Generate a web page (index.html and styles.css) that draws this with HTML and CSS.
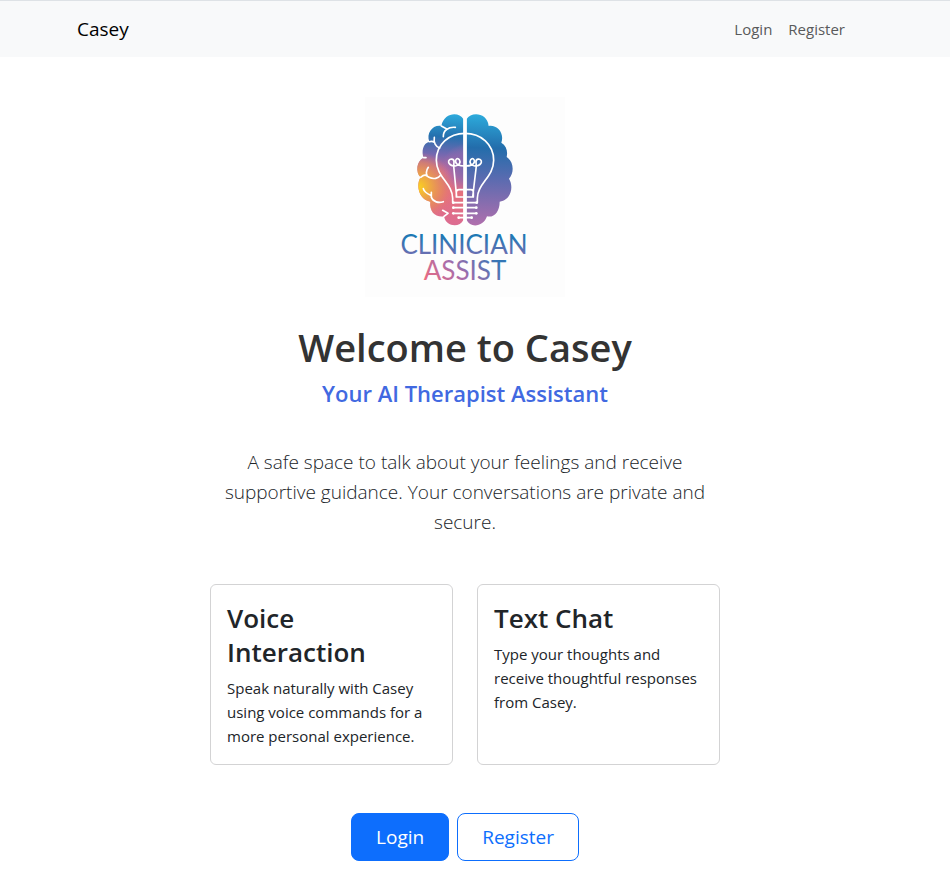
FILE: index.html
```html
<!DOCTYPE html>
<html lang="en">
<head>
<meta charset="utf-8">
<meta name="viewport" content="width=device-width, initial-scale=1">
<title>Casey</title>
<link rel="stylesheet" href="styles.css">
</head>
<body>
<header class="navbar">
  <div class="container navbar-inner">
    <a class="brand" href="#">Casey</a>
    <nav class="nav-links">
      <a href="#login">Login</a>
      <a href="#register">Register</a>
    </nav>
  </div>
</header>
<main class="page">
  <div class="container hero">
    <svg class="logo" viewBox="0 0 200 200" role="img" aria-label="Clinician Assist">
      <defs>
        <linearGradient id="left" gradientUnits="userSpaceOnUse" x1="120" y1="28" x2="105" y2="361">
          <stop offset="0" stop-color="#2ca9db"/>
          <stop offset=".2" stop-color="#2570ae"/>
          <stop offset=".36" stop-color="#7468b0"/>
          <stop offset=".52" stop-color="#c66c9c"/>
          <stop offset=".7" stop-color="#e5707c"/>
          <stop offset="1" stop-color="#dc6c92"/>
        </linearGradient>
        <radialGradient id="sun" gradientUnits="userSpaceOnUse" cx="42" cy="246" r="105">
          <stop offset="0" stop-color="#fbd021"/>
          <stop offset=".35" stop-color="#eda744" stop-opacity=".95"/>
          <stop offset=".7" stop-color="#e5865f" stop-opacity=".7"/>
          <stop offset="1" stop-color="#e5707c" stop-opacity="0"/>
        </radialGradient>
        <radialGradient id="dusk" gradientUnits="userSpaceOnUse" cx="185" cy="190" r="75">
          <stop offset="0" stop-color="#7468b0"/>
          <stop offset=".5" stop-color="#8c69ae" stop-opacity=".7"/>
          <stop offset="1" stop-color="#b06aa8" stop-opacity="0"/>
        </radialGradient>
        <linearGradient id="right" gradientUnits="userSpaceOnUse" x1="225" y1="28" x2="215" y2="361">
          <stop offset="0" stop-color="#2cabdc"/>
          <stop offset=".3" stop-color="#236dab"/>
          <stop offset=".58" stop-color="#5b6bb0"/>
          <stop offset="1" stop-color="#b06fad"/>
        </linearGradient>
        <linearGradient id="word1" x1="0" y1="0" x2="0" y2="1">
          <stop offset=".25" stop-color="#1f78b4"/>
          <stop offset=".85" stop-color="#6d6eb2"/>
        </linearGradient>
        <linearGradient id="word2" x1="0" y1=".8" x2="1" y2=".4">
          <stop offset="0" stop-color="#ee6c80"/>
          <stop offset=".45" stop-color="#a56dac"/>
          <stop offset="1" stop-color="#3276b6"/>
        </linearGradient>
        <path id="lobe" d="M175 42C162 20 117 22 109 63C84 58 63 84 73 110C53 115 49 140 56 158C34 167 31 202 47 217C32 239 41 284 76 290C73 321 92 338 117 334C122 366 165 369 175 345Z"/>
      </defs>
      <rect width="200" height="200" fill="#fdfdfd"/>
      <g transform="translate(40 8) scale(.33333)">
        <use href="#lobe" fill="url(#left)"/>
        <use href="#lobe" fill="url(#dusk)"/>
        <use href="#lobe" fill="url(#sun)"/>
        <path fill="url(#right)" d="M185 42C198 20 247 22 251 63C277 59 299 85 289 113C304 122 309 139 305 156C326 169 329 203 312 221C328 247 316 286 284 290C284 319 268 339 246 334C236 366 195 370 185 345Z"/>
        <g fill="none" stroke="#fff" stroke-width="5" stroke-linecap="round" stroke-linejoin="round">
          <path d="M109 63L124 71M151 67C130 65 114 77 115 95M73 110C79 108 84 109 88 112M88 97C85 112 92 125 104 129M56 158H63M70 187C62 198 64 208 66 211M47 217C60 206 64 211 72 217C86 224 100 220 107 211M55 251C57 261 66 266 77 271M79 262V277C84 291 101 295 115 290M113 316L129 325L117 334"/>
          <path d="M143 293V280C143 236 94 216 94 166C94 118 132 85 180 85S266 118 266 166C266 216 217 236 217 280V293M143 293H217"/>
          <path d="M155 276L146 183C137 181 129 176 131 168C134 159 147 161 147 170C147 178 144 183 151 183C163 181 168 172 163 164C158 157 150 162 152 171C154 181 165 183 180 183C195 183 206 181 208 171C210 162 202 157 197 164C192 172 197 181 209 183C216 183 213 178 213 170C213 161 226 159 229 168C231 176 223 181 214 183L203 276M155 276H205M154 276V262C154 255 158 254 162 254H198C202 254 205 257 205 262V276"/>
          <path d="M145 308H214M145 325H214M161 338H200"/>
        </g>
        <g fill="#fff"><circle cx="145" cy="293" r="4"/><circle cx="215" cy="293" r="4"/><circle cx="145" cy="308" r="4"/><circle cx="214" cy="308" r="4"/><circle cx="145" cy="325" r="4"/><circle cx="214" cy="325" r="4"/><circle cx="161" cy="338" r="4"/><circle cx="200" cy="338" r="4"/></g>
        <path d="M175 25H185V362H175Z" fill="#fff"/>
      </g>
      <text class="logo-word" x="99" y="157" fill="url(#word1)">CLINICIAN</text>
      <text class="logo-word" x="100" y="183" fill="url(#word2)">ASSIST</text>
    </svg>
    <h1>Welcome to Casey</h1>
    <p class="tagline">Your AI Therapist Assistant</p>
    <p class="lead">A safe space to talk about your feelings and receive supportive guidance. Your conversations are private and secure.</p>
    <div class="features">
      <section class="card">
        <h2>Voice Interaction</h2>
        <p>Speak naturally with Casey using voice commands for a more personal experience.</p>
      </section>
      <section class="card">
        <h2>Text Chat</h2>
        <p>Type your thoughts and receive thoughtful responses from Casey.</p>
      </section>
    </div>
    <div class="actions">
      <a class="btn btn-primary" href="#login">Login</a>
      <a class="btn btn-outline" href="#register">Register</a>
    </div>
  </div>
</main>
</body>
</html>
```
FILE: styles.css
```css
* { box-sizing: border-box; }

body {
  margin: 0;
  background: #fff;
  color: #212529;
  font: 15px/24px "Segoe UI", "Open Sans", "Noto Sans", sans-serif;
}

h1, h2, p { margin: 0; }
a { text-decoration: none; }

.container {
  max-width: 800px;
  margin: 0 auto;
  padding: 0 12px;
}

.navbar {
  background: #f8f9fa;
  border-top: 1px solid #dee2e6;
  padding: 8px 20px 8px 0;
}

.navbar-inner {
  display: flex;
  align-items: center;
  justify-content: space-between;
  min-height: 40px;
}

.brand {
  color: #000;
  font-size: 19px;
  line-height: 30px;
}

.nav-links {
  display: flex;
  gap: 16px;
  padding-right: 8px;
}

.nav-links a { color: #595a5b; }

.page { padding: 40px 20px 32px 0; }

.hero {
  display: flex;
  flex-direction: column;
  align-items: center;
  text-align: center;
}

.logo {
  display: block;
  width: 200px;
  height: 200px;
}

.logo-word {
  font-family: Lato, sans-serif;
  font-size: 26px;
  text-anchor: middle;
}

h1 {
  margin-top: 26px;
  color: #333;
  font-size: 38px;
  font-weight: 600;
  line-height: 48px;
}

.tagline {
  margin-top: 8px;
  color: #4169e1;
  font-size: 22px;
  font-weight: 600;
  line-height: 28px;
}

.lead {
  max-width: 510px;
  margin-top: 40px;
  font-size: 19px;
  font-weight: 300;
  line-height: 30px;
}

.features {
  display: grid;
  grid-template-columns: 1fr 1fr;
  gap: 24px;
  width: 100%;
  max-width: 510px;
  margin-top: 47px;
  text-align: left;
}

.card {
  border: 1px solid #d3d3d4;
  border-radius: 6px;
  padding: 16px;
}

.card h2 {
  margin-bottom: 7px;
  font-size: 26px;
  font-weight: 600;
  line-height: 34px;
}

.actions {
  display: flex;
  gap: 8px;
  margin-top: 48px;
}

.btn {
  border: 1px solid #0d6efd;
  border-radius: 8px;
  padding: 8px 24px;
  font-size: 19px;
  line-height: 30px;
}

.btn-primary {
  background: #0d6efd;
  color: #fff;
}

.btn-outline { color: #0d6efd; }
```
